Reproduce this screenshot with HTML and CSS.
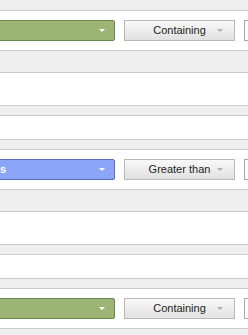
FILE: index.html
```html
<!DOCTYPE html>
<html lang="en">
<head>
    <meta charset="UTF-8">
    <meta name="viewport" content="width=device-width, initial-scale=1.0">
    <title>Filters</title>
    <link rel="stylesheet" href="styles.css">
</head>
<body>
    <div class="band band-top"></div>

    <!-- Filter 1 -->
    <div class="filter-row">
        <div class="field-select green"><i class="arrow"></i></div>
        <div class="op-button">Containing<i class="arrow"></i></div>
        <input class="value-input" type="text">
    </div>
    <div class="band band-head"></div>
    <div class="blank blank-tall"></div>
    <div class="band band-thin"></div>
    <div class="blank blank-short"></div>
    <div class="band band-thin"></div>

    <!-- Filter 2 -->
    <div class="filter-row">
        <div class="field-select blue"><span>Visits</span><i class="arrow"></i></div>
        <div class="op-button">Greater than<i class="arrow"></i></div>
        <input class="value-input" type="text">
    </div>
    <div class="band band-head"></div>
    <div class="blank blank-tall"></div>
    <div class="band band-thin"></div>
    <div class="blank blank-short"></div>
    <div class="band band-thin"></div>

    <!-- Filter 3 -->
    <div class="filter-row">
        <div class="field-select green"><i class="arrow"></i></div>
        <div class="op-button">Containing<i class="arrow"></i></div>
        <input class="value-input" type="text">
    </div>
    <div class="band band-head"></div>
</body>
</html>
```

FILE: styles.css
```css
html, body {
    overflow: hidden;
}

body {
    font-family: "Liberation Sans", Arial, sans-serif;
    font-size: 11px;
    margin: 0;
    padding: 0;
    background-color: #fff;
}

.band {
    background-color: #eeeeee;
    border-bottom: 1px solid #cccccc;
}

.band-top {
    height: 10px;
}

.band-head {
    height: 21px;
}

.band-thin {
    height: 9px;
}

.blank {
    background-color: #fff;
    border-bottom: 1px solid #cccccc;
}

.blank-tall {
    height: 32px;
}

.blank-short {
    height: 23px;
}

.filter-row {
    display: flex;
    gap: 9px;
    height: 21px;
    padding: 9px 0;
    margin-left: -32px;
    border-bottom: 1px solid #cccccc;
    background-color: #fff;
}

.field-select {
    flex: none;
    position: relative;
    box-sizing: border-box;
    width: 147px;
    height: 21px;
    padding-left: 8px;
    border: 1px solid;
    border-radius: 2px;
    color: #fff;
    font-weight: bold;
    line-height: 19px;
}

.field-select.green {
    background-color: #9db574;
    border-color: #6a8948;
}

.field-select.blue {
    background-color: #8ba6f7;
    border-color: #5a70bf;
}

.field-select .arrow {
    position: absolute;
    right: 9px;
    top: 8px;
    border-left: 3px solid transparent;
    border-right: 3px solid transparent;
    border-top: 3px solid #fff;
}

.op-button {
    flex: none;
    position: relative;
    box-sizing: border-box;
    width: 111px;
    height: 21px;
    border: 1px solid #b8b8b8;
    background: linear-gradient(to bottom, #f9f9f9, #e1e1e1);
    color: #1e1e1e;
    text-align: center;
    line-height: 19px;
}

.op-button .arrow {
    position: absolute;
    right: 11px;
    top: 8px;
    border-left: 3px solid transparent;
    border-right: 3px solid transparent;
    border-top: 3px solid #b0b0b0;
}

.value-input {
    flex: none;
    box-sizing: border-box;
    width: 100px;
    height: 21px;
    margin: 0;
    border: 1px solid #a8a8a8;
    background-color: #fff;
}
```
